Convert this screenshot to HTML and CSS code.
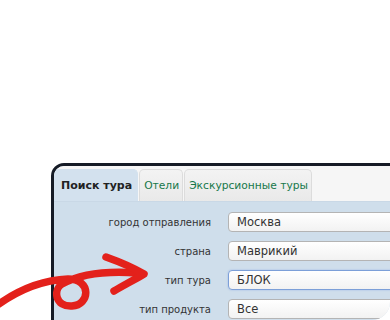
FILE: index.html
```html
<!DOCTYPE html>
<html lang="ru">
<head>
  <meta charset="UTF-8">
  <meta name="viewport" content="width=device-width, initial-scale=1.0">
  <title>Поиск тура</title>
  <link rel="stylesheet" href="styles.css">
</head>
<body>

  <div class="shot">
    <div class="frame">
      <div class="tabs">
        <div class="tab active">Поиск тура</div>
        <div class="tab">Отели</div>
        <div class="tab">Экскурсионные туры</div>
      </div>

      <div class="form">
        <div class="row">
          <label>город отправления</label>
          <div class="field">Москва</div>
        </div>
        <div class="row">
          <label>страна</label>
          <div class="field">Маврикий</div>
        </div>
        <div class="row">
          <label>тип тура</label>
          <div class="field focus">БЛОК</div>
        </div>
        <div class="row">
          <label>тип продукта</label>
          <div class="field">Все</div>
        </div>
      </div>
    </div>

    <!-- hand drawn arrow on top of the form -->
    <svg class="arrow" width="160" height="70" viewBox="0 250 160 70">
      <path d="M -4 306 C 18 290, 42 280, 68 279 C 92 279, 90 305, 72 306 C 55 307, 53 290, 62 284 C 82 273, 112 271, 138 273"
            fill="none" stroke="#e3211b" stroke-width="7.5" stroke-linecap="round" stroke-linejoin="round"/>
      <path d="M 106 257 C 120 262, 132 267, 144 274 C 134 280, 124 285, 114 291"
            fill="none" stroke="#e3211b" stroke-width="7.5" stroke-linecap="round" stroke-linejoin="round"/>
    </svg>
  </div>

</body>
</html>
```

FILE: styles.css
```css
body {
  margin: 0;
  padding: 0;
  background: #ffffff;
  font-family: "DejaVu Sans", Verdana, sans-serif;
  overflow: hidden;
}

.shot {
  position: relative;
  width: 390px;
  height: 320px;
  overflow: hidden;
  border-bottom-right-radius: 18px;
  padding-top: 163px;
  padding-left: 51px;
  box-sizing: border-box;
}

.frame {
  width: 420px;
  height: 200px;
  border: 3px solid #161b26;
  border-top-left-radius: 13px;
  background: #cfdeeb;
  overflow: hidden;
}

.tabs {
  display: flex;
  align-items: flex-end;
  height: 36px;
  background: #f6f6f6;
  border-bottom: 1px solid #c9d8e6;
  box-sizing: border-box;
}

.tab {
  height: 32px;
  line-height: 32px;
  padding: 0 3px 0 4px;
  font-size: 10.7px;
  color: #17784a;
  background: linear-gradient(#f3f3f3, #e9e9e9);
  border: 1px solid #dcdcdc;
  border-bottom: none;
  border-radius: 5px 5px 0 0;
  box-sizing: border-box;
  margin-right: 1px;
}

.tab.active {
  color: #222222;
  font-weight: bold;
  font-size: 11px;
  background: #d3e1ee;
  border-color: #d3e1ee;
  padding: 0 5px 0 6px;
}

.form {
  padding-top: 10px;
  display: flex;
  flex-direction: column;
  gap: 9px;
}

.row {
  display: flex;
  align-items: center;
  height: 20px;
}

.row label {
  width: 157px;
  text-align: right;
  font-size: 10px;
  color: #333333;
  margin-right: 17px;
}

.field {
  flex: 1;
  height: 20px;
  line-height: 19px;
  padding-left: 8px;
  font-size: 11.5px;
  color: #333333;
  border: 1px solid #b4b4b4;
  border-radius: 4px;
  background: linear-gradient(#ffffff, #f2f2f2);
  box-sizing: border-box;
}

.field.focus {
  border-color: #7c9fd8;
  box-shadow: 0 0 2px #9db8e6;
}

.arrow {
  position: absolute;
  left: 0;
  top: 250px;
}
```
